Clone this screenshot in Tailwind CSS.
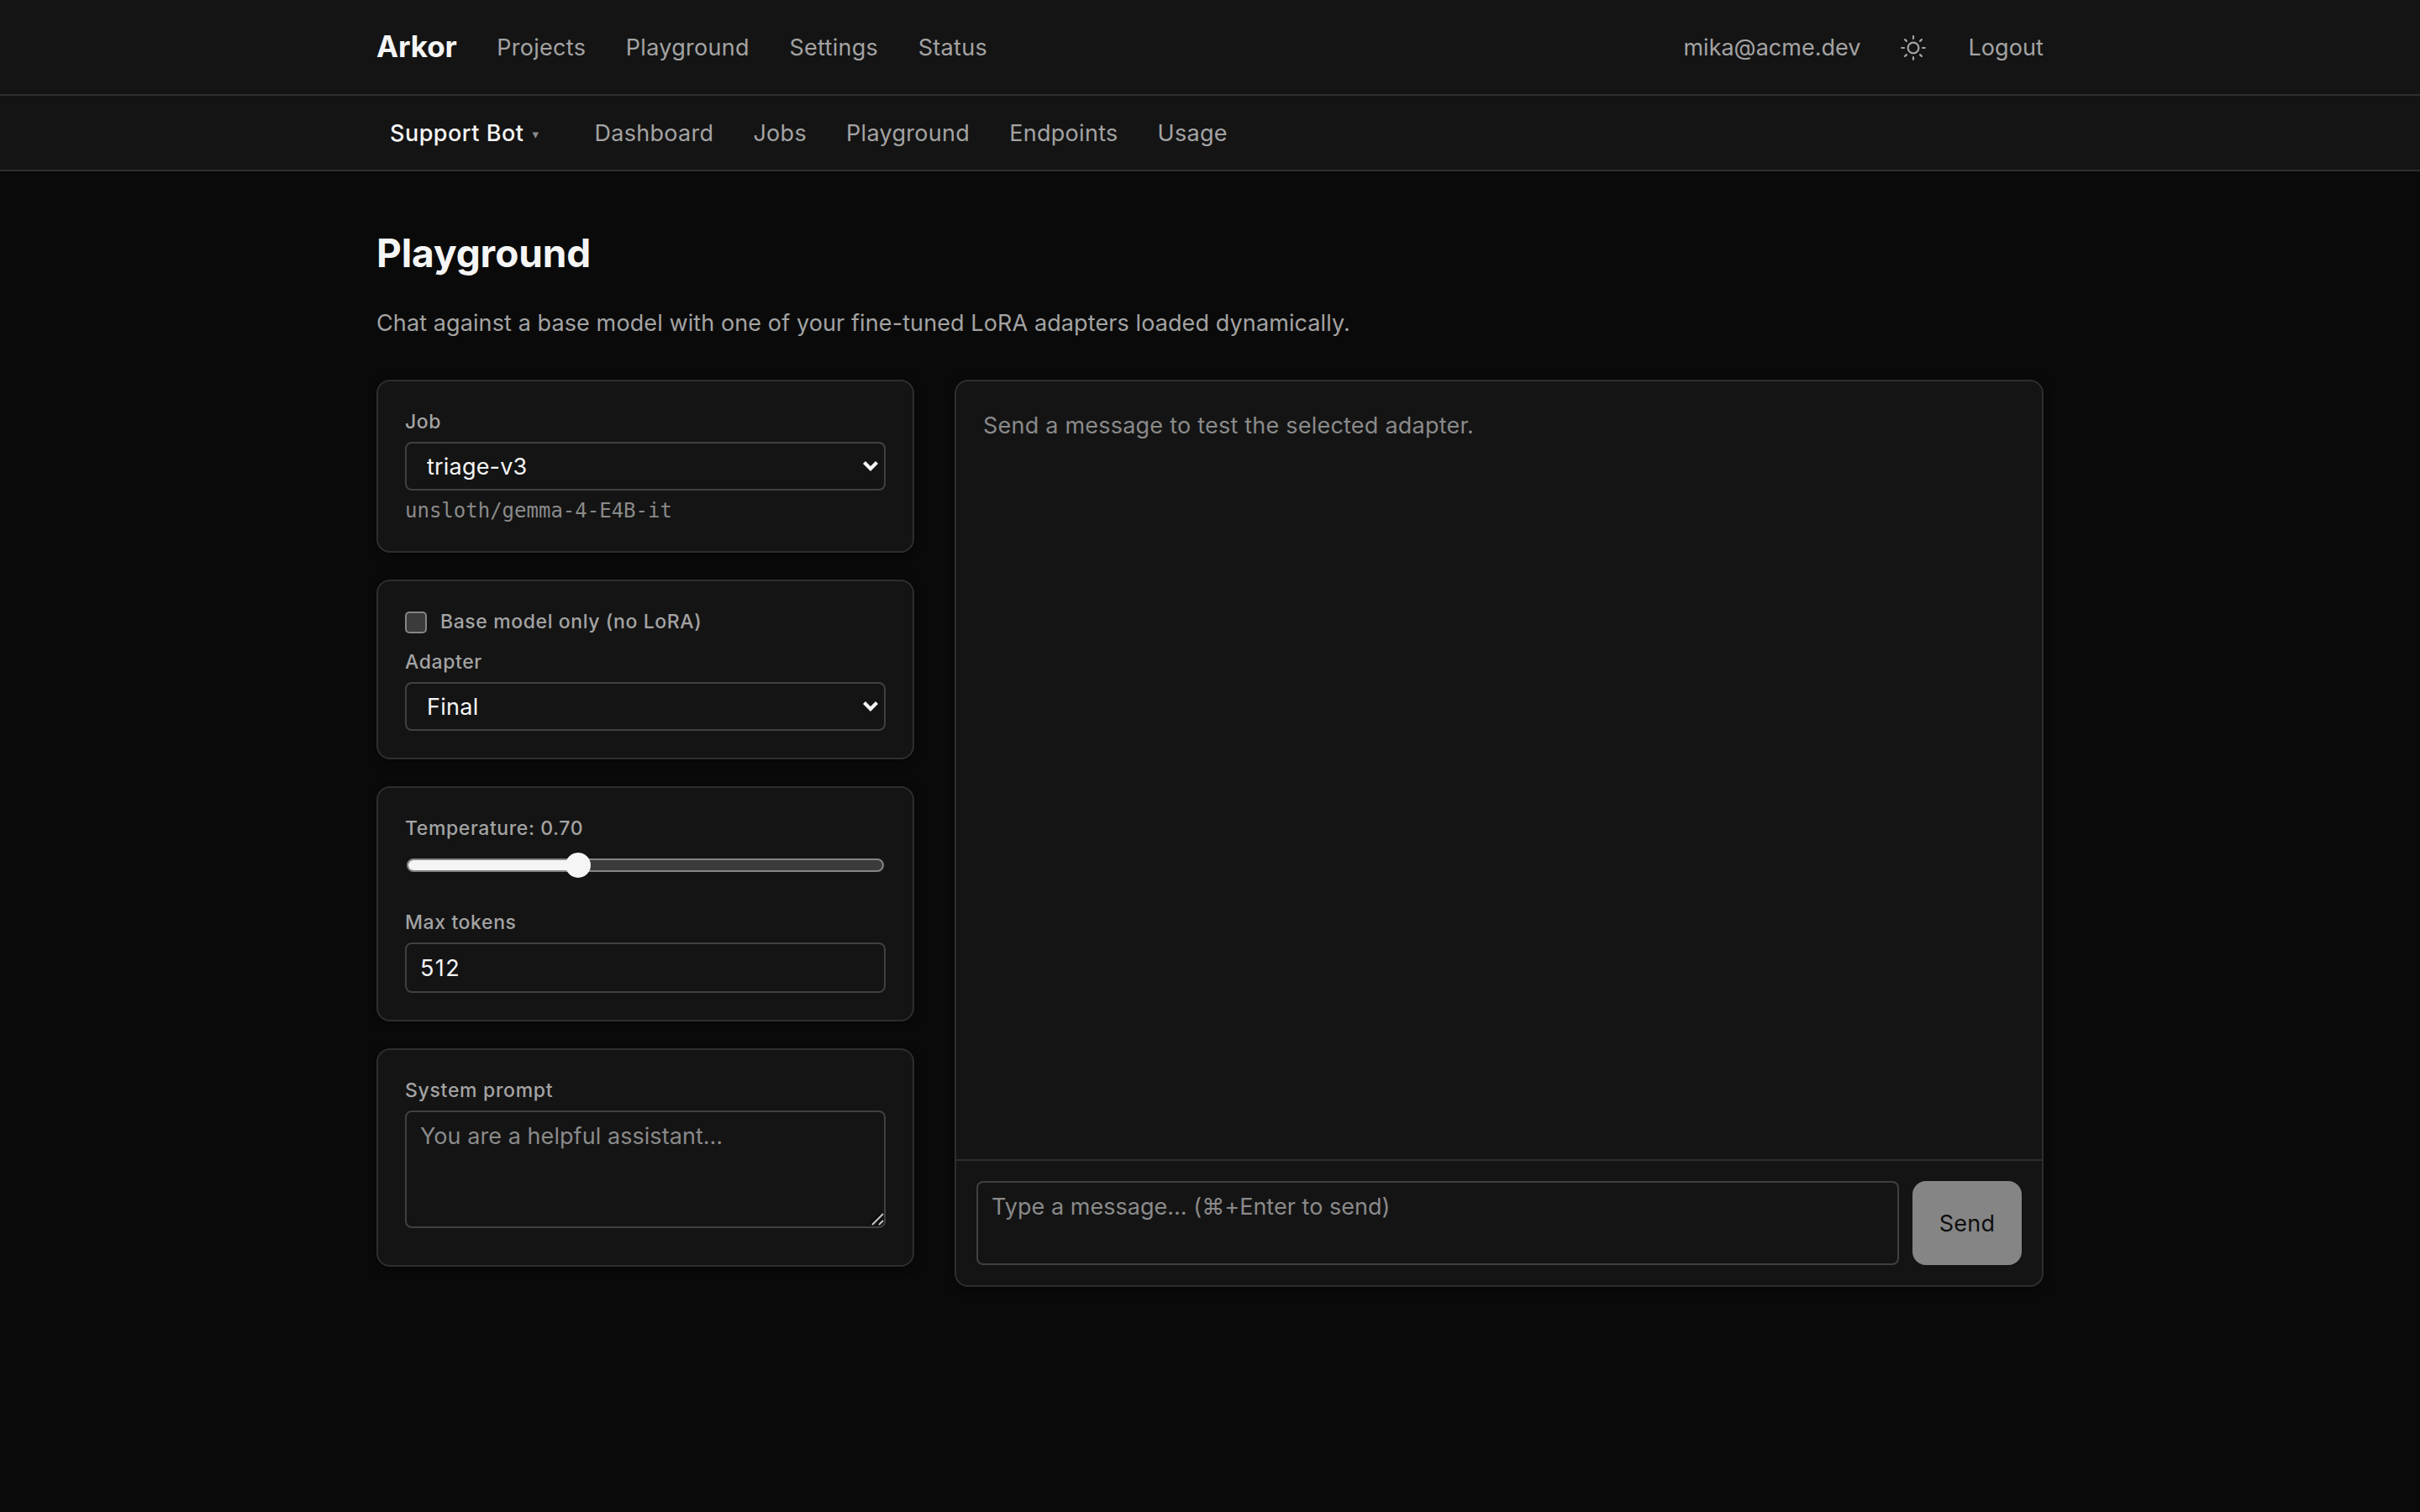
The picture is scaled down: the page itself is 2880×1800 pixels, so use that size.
<!DOCTYPE html>
<html lang="en">
<head>
    <meta charset="UTF-8">
    <title>Playground - Arkor</title>
    <script src="https://cdn.jsdelivr.net/npm/@tailwindcss/browser@4"></script>
</head>
<body class="min-h-screen bg-[#0a0a0a] text-[#f5f5f5] font-['Inter',sans-serif] text-[27px] leading-10">
<header class="h-[114px] bg-[#141414] border-b-2 border-[#2e2e2e]">
    <div class="w-[1984px] h-full mx-auto pt-0.5 flex items-center justify-between">
        <nav class="flex items-center gap-[47.5px] text-[#a3a3a3] tracking-[0.3px]">
            <a href="#" class="pb-1 text-[35px] font-bold tracking-[-0.1px] text-[#f5f5f5]">Arkor</a>
            <a href="#">Projects</a>
            <a href="#">Playground</a>
            <a href="#">Settings</a>
            <a href="#">Status</a>
        </nav>
        <div class="flex items-center text-[#a3a3a3]">
            <span>mika@acme.dev</span>
            <button type="button" aria-label="Toggle theme" class="ml-[47px] mr-[49px]">
                <svg class="block w-8 h-8" viewBox="-16 -16 32 32" fill="none" stroke="currentColor" stroke-width="2.2" stroke-linecap="round">
                    <circle r="6.4"/>
                    <path d="M0-13.8v2.8M0 11v2.8M-13.8 0h2.8M11 0h2.8M-9.9-9.9l1.8 1.8M8.1 8.1l1.8 1.8M-9.9 9.9l1.8-1.8M8.1-8.1l1.8-1.8"/>
                </svg>
            </button>
            <a href="#" class="tracking-[0.1px]">Logout</a>
        </div>
    </div>
</header>
<div class="h-[90px] bg-[#141414] border-b-2 border-[#2e2e2e]">
    <nav class="w-[1984px] h-full mx-auto pt-0.5 flex items-center gap-[47px] text-[#a3a3a3] tracking-[0.3px]">
        <button type="button" class="flex items-center gap-2.5 pl-4 pr-[19px] font-medium tracking-[0.5px] text-[#f5f5f5]">
            Support Bot
            <span class="pt-0.5 font-['DejaVu_Sans',sans-serif] font-normal text-[15px] text-[#8a8a8a]">▾</span>
        </button>
        <a href="#">Dashboard</a>
        <a href="#">Jobs</a>
        <a href="#">Playground</a>
        <a href="#">Endpoints</a>
        <a href="#">Usage</a>
    </nav>
</div>
<main class="w-[1984px] mx-auto pt-16">
    <h1 class="text-[46px] leading-[66px] font-bold tracking-[-0.1px]">Playground</h1>
    <p class="mt-[31px] text-[#a3a3a3] tracking-[0.1px]">Chat against a base model with one of your fine-tuned LoRA adapters loaded dynamically.</p>
    <div class="mt-[47px] flex items-start gap-12">
        <aside class="w-[640px] flex flex-col gap-8">
            <section class="p-8 bg-[#141414] border-2 border-[#2e2e2e] rounded-2xl shadow-[0_2px_8px_rgba(0,0,0,0.5)]">
                <label for="job" class="block mb-2 text-[23px] leading-8 font-medium tracking-[0.6px] text-[#a3a3a3]">Job</label>
                <div class="relative">
                    <select id="job" class="block w-full h-[58px] px-6 pt-0.5 appearance-none bg-[#141414] border-2 border-[#404040] rounded-lg tracking-[0.2px]">
                        <option>triage-v3</option>
                    </select>
                    <svg class="absolute right-2 top-5 w-5 h-5 pointer-events-none" viewBox="0 0 20 20" fill="none" stroke="#f5f5f5" stroke-width="4.2">
                        <path d="M2.5 4.5L10 12l7.5-7.5"/>
                    </svg>
                </div>
                <div class="pt-[7px] -mb-px font-['DejaVu_Sans_Mono',monospace] text-[24px] leading-[34px] text-[#8a8a8a]">unsloth/gemma-4-E4B-it</div>
            </section>

            <section class="p-8 bg-[#141414] border-2 border-[#2e2e2e] rounded-2xl shadow-[0_2px_8px_rgba(0,0,0,0.5)]">
                <label class="flex items-center gap-4 mb-4 text-[23px] leading-8 font-medium tracking-[0.6px] text-[#a3a3a3]">
                    <input type="checkbox" class="w-[26px] h-[26px] mt-0.5 appearance-none bg-[#3b3b3b] border-2 border-[#858585] rounded-[5px]">
                    Base model only (no LoRA)
                </label>
                <label for="adapter" class="block mb-2 text-[23px] leading-8 font-medium tracking-[0.6px] text-[#a3a3a3]">Adapter</label>
                <div class="relative">
                    <select id="adapter" class="block w-full h-[58px] px-6 pt-0.5 appearance-none bg-[#141414] border-2 border-[#404040] rounded-lg tracking-[0.3px]">
                        <option>Final</option>
                    </select>
                    <svg class="absolute right-2 top-5 w-5 h-5 pointer-events-none" viewBox="0 0 20 20" fill="none" stroke="#f5f5f5" stroke-width="4.2">
                        <path d="M2.5 4.5L10 12l7.5-7.5"/>
                    </svg>
                </div>
            </section>

            <section class="p-8 bg-[#141414] border-2 border-[#2e2e2e] rounded-2xl shadow-[0_2px_8px_rgba(0,0,0,0.5)]">
                <div class="text-[23px] leading-8 font-medium tracking-[0.6px] text-[#a3a3a3]">Temperature: 0.70</div>
                <div class="relative h-10 mt-2 mb-8 px-0.5 flex items-center">
                    <div class="w-full h-4 bg-[#3b3b3b] border-2 border-[#858585] rounded-full">
                        <div class="w-[204px] h-full bg-[#f5f5f5] rounded-l-full"></div>
                    </div>
                    <div class="absolute left-[191px] top-[5px] w-[30px] h-[30px] bg-[#f5f5f5] rounded-full"></div>
                </div>
                <label for="tokens" class="block mb-2 text-[23px] leading-8 font-medium tracking-[0.6px] text-[#a3a3a3]">Max tokens</label>
                <input id="tokens" type="text" value="512" class="block w-full h-[60px] px-4 bg-[#141414] border-2 border-[#404040] rounded-lg tracking-[1.4px]">
            </section>

            <section class="p-8 pb-11 bg-[#141414] border-2 border-[#2e2e2e] rounded-2xl shadow-[0_2px_8px_rgba(0,0,0,0.5)]">
                <label for="system" class="block mb-2 text-[23px] leading-8 font-medium tracking-[0.7px] text-[#a3a3a3]">System prompt</label>
                <div class="relative">
                    <textarea id="system" placeholder="You are a helpful assistant…" class="block w-full h-[140px] px-4 py-[11px] leading-9 resize-none bg-[#141414] border-2 border-[#404040] rounded-lg tracking-[0.06px] placeholder:text-[#8a8a8a]"></textarea>
                    <!-- resize grip -->
                    <svg class="absolute right-0.5 bottom-0.5 w-4 h-4 pointer-events-none" viewBox="0 0 16 16" fill="none">
                        <path d="M1 13L14 0M9 13l5-5" stroke="#0a0a0a" stroke-width="4"/>
                        <path d="M2 14L15 1M10 14l5-5" stroke="#c4c4c4" stroke-width="2"/>
                    </svg>
                </div>
            </section>
        </aside>

        <section class="w-[1296px] h-[1080px] flex flex-col bg-[#141414] border-2 border-[#2e2e2e] rounded-2xl shadow-[0_2px_8px_rgba(0,0,0,0.5)]">
            <div class="flex-1 px-8 pt-[33px]">
                <p class="text-[#8a8a8a] tracking-[0.22px]">Send a message to test the selected adapter.</p>
            </div>
            <form class="flex gap-4 p-6 border-t-2 border-[#2e2e2e]">
                <textarea placeholder="Type a message… (⌘+Enter to send)" class="block w-[1098px] h-[100px] px-4 py-[11px] leading-9 resize-none bg-[#141414] border-2 border-[#404040] rounded-lg tracking-[0.03px] placeholder:text-[#8a8a8a]"></textarea>
                <button type="button" disabled class="w-[130px] h-[100px] pt-0.5 bg-[#858585] text-[#0f0f0f] rounded-2xl tracking-[0.3px]">Send</button>
            </form>
        </section>
    </div>
</main>
</body>
</html>
